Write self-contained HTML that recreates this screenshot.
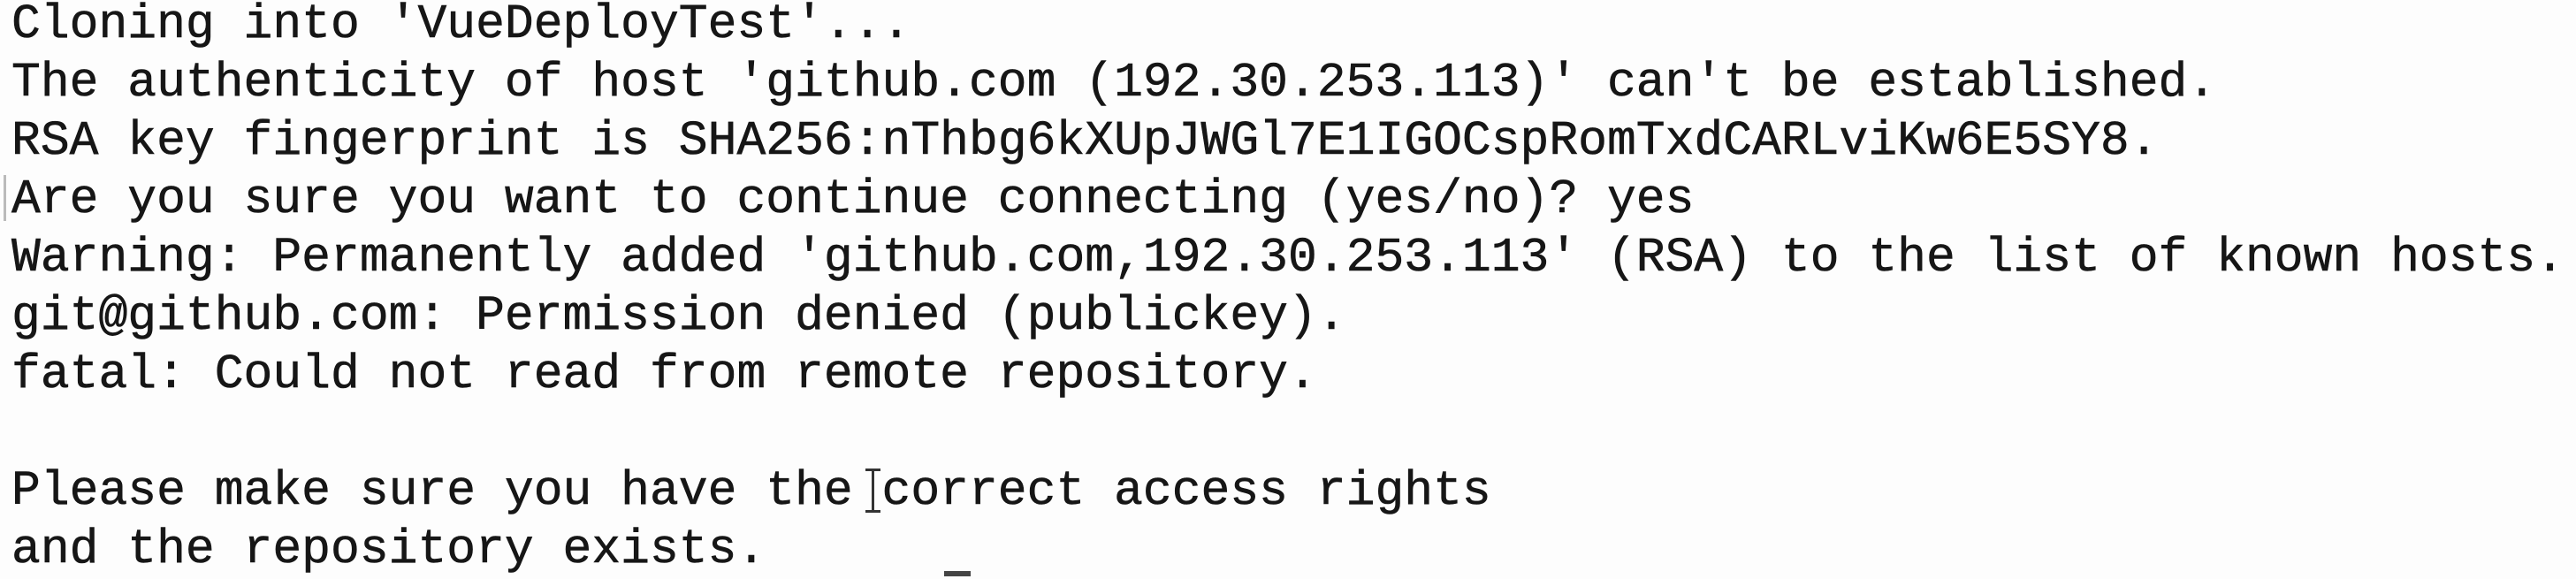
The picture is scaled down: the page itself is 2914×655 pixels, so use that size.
<!DOCTYPE html>
<html><head><meta charset="utf-8"><style>
html,body{margin:0;padding:0;background:#fdfdfd;width:2914px;height:652px;overflow:hidden}
pre{position:absolute;left:13px;top:-5px;margin:0;font-family:"Liberation Mono","DejaVu Sans Mono",monospace;font-size:54.7px;line-height:66px;color:#161616;white-space:pre;-webkit-text-stroke:0.6px #161616}
.bar{position:absolute;left:4px;top:198px;width:3px;height:52px;background:#bbb}
.ib{position:absolute;left:986px;top:530px;width:3px;height:50px;background:#333}
.ib:before,.ib:after{content:"";position:absolute;left:-7px;width:17px;height:3px;background:#333}
.ib:before{top:0}.ib:after{bottom:0}
.cur{position:absolute;left:1068px;top:646px;width:30px;height:6px;background:#444}
</style></head><body>
<div class="bar"></div>
<pre>Cloning into 'VueDeployTest'...
The authenticity of host 'github.com (192.30.253.113)' can't be established.
RSA key fingerprint is SHA256:nThbg6kXUpJWGl7E1IGOCspRomTxdCARLviKw6E5SY8.
Are you sure you want to continue connecting (yes/no)? yes
Warning: Permanently added 'github.com,192.30.253.113' (RSA) to the list of known hosts.
git@github.com: Permission denied (publickey).
fatal: Could not read from remote repository.

Please make sure you have the correct access rights
and the repository exists.</pre>
<div class="ib"></div>
<div class="cur"></div>
</body></html>
